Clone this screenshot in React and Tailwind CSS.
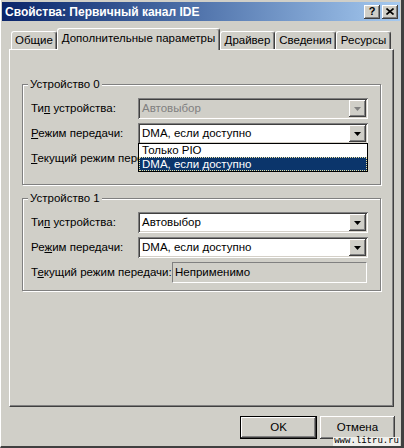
import React from "react";

const raised =
  "shadow-[inset_-1px_-1px_0_#404040,inset_1px_1px_0_#ffffff,inset_-2px_-2px_0_#808080,inset_2px_2px_0_#d4d0c8]";
const sunken =
  "shadow-[inset_1px_1px_0_#808080,inset_-1px_-1px_0_#ffffff,inset_2px_2px_0_#404040,inset_-2px_-2px_0_#d4d0c8]";

const Arrow = ({ color = "#000" }) => (
  <svg width="7" height="4" viewBox="0 0 7 4">
    <polygon points="0,0 7,0 3.5,4" fill={color} />
  </svg>
);

const Combo = ({ value, disabled, children }) => (
  <div
    className={`relative flex items-center h-[21px] w-[230px] p-[2px] ${sunken} ${
      disabled ? "bg-[#d0cfc8]" : "bg-white"
    }`}
  >
    <span className={`flex-1 pl-[2px] ${disabled ? "text-[#808080]" : "text-black"}`}>{value}</span>
    <div className={`flex items-center justify-center w-[17px] h-[17px] bg-[#d0cfc8] ${raised}`}>
      <Arrow color={disabled ? "#808080" : "#000"} />
    </div>
    {children}
  </div>
);

const Row = ({ label, children }) => (
  <div className="flex items-center h-[21px]">
    <span className="w-[115px] pl-[8px] whitespace-nowrap">{label}</span>
    {children}
  </div>
);

const Field = ({ label, value }) => (
  <div className="flex items-center h-[21px]">
    <span className="w-[149px] pl-[8px] whitespace-nowrap">{label}</span>
    <div className="flex items-center h-[21px] w-[195px] border border-t-[#808080] border-l-[#808080] border-r-white border-b-white pl-[2px]">
      {value}
    </div>
  </div>
);

const Group = ({ title, height, className = "", children }) => (
  <div
    className={`relative w-[359px] border border-[#808080] shadow-[inset_1px_1px_0_#ffffff,1px_1px_0_#ffffff] ${className}`}
    style={{ height }}
  >
    <span className="absolute -top-[8px] left-[5px] px-[2px] bg-[#d0cfc8] leading-[14px]">{title}</span>
    <div className="flex flex-col gap-[4px] pt-[13px]">{children}</div>
  </div>
);

const Tab = ({ label, w, active }) => (
  <div
    className={`flex items-center justify-center rounded-t-[3px] border-t border-l border-white bg-[#d0cfc8] shadow-[inset_-1px_0_0_#808080] border-r border-r-[#404040] ${
      active ? "relative z-10 h-[22px] -mb-[1px] pb-[2px]" : "h-[18px]"
    }`}
    style={{ width: w }}
  >
    {label}
  </div>
);

export default function App() {
  return (
    <div
      className="relative flex flex-col w-[404px] h-[448px] bg-[#d0cfc8] border-l border-l-white border-r-[3px] border-r-[#404040] border-b-2 border-b-[#404040] text-[11.5px] text-black overflow-hidden"
      style={{ fontFamily: '"Liberation Sans", Arial, sans-serif' }}
    >
      <div className="flex items-center h-[19px] mt-[2px] mx-[1px] pl-[3px] pr-[2px] bg-gradient-to-r from-[#0a246a] to-[#a6caf0]">
        <span className="flex-1 text-white font-bold text-[12px]">Свойства: Первичный канал IDE</span>
        <div className="flex gap-[2px]">
          <div className={`flex items-center justify-center w-[16px] h-[14px] bg-[#d0cfc8] font-bold text-[11px] leading-none ${raised}`}>?</div>
          <div className={`flex items-center justify-center w-[16px] h-[14px] bg-[#d0cfc8] ${raised}`}>
            <svg width="8" height="7" viewBox="0 0 8 7">
              <path d="M0.5 0.5 L7.5 6.5 M7.5 0.5 L0.5 6.5" stroke="#000" strokeWidth="1.6" />
            </svg>
          </div>
        </div>
      </div>

      <div className="flex items-end ml-[10px] mt-[7px] h-[21px]">
        <Tab label="Общие" w={46} />
        <Tab label="Дополнительные параметры" w={163} active />
        <Tab label="Драйвер" w={55} />
        <Tab label="Сведения" w={61} />
        <Tab label="Ресурсы" w={55} />
      </div>

      <div className="flex flex-col ml-[8px] w-[385px] h-[358px] pl-[12px] pt-[34px] border-t border-l border-white border-r border-b border-r-[#404040] border-b-[#404040] shadow-[inset_-1px_-1px_0_#808080]">
        <Group title="Устройство 0" height={101}>
          <Row label={<>Ти<u>п</u> устройства:</>}>
            <Combo value="Автовыбор" disabled />
          </Row>
          <Row label={<><u>Р</u>ежим передачи:</>}>
            <Combo value="DMA, если доступно">
              <div className="absolute left-0 top-[20px] z-20 w-[230px] h-[29px] border border-black bg-white flex flex-col">
                <div className="h-[13px] leading-[13px] pl-[3px]">Только PIO</div>
                <div className="h-[14px] leading-[12px] pl-[2px] bg-[#0b356b] text-white border border-dotted border-[#e8e0a0]">
                  DMA, если доступно
                </div>
              </div>
            </Combo>
          </Row>
          <Field label={<><u>Т</u>екущий режим передачи:</>} value="Неприменимо" />
        </Group>

        <Group title="Устройство 1" height={93} className="mt-[13px]">
          <Row label={<>Ти<u>п</u> устройства:</>}>
            <Combo value="Автовыбор" />
          </Row>
          <Row label={<>Ре<u>ж</u>им передачи:</>}>
            <Combo value="DMA, если доступно" />
          </Row>
          <Field label={<>Т<u>е</u>кущий режим передачи:</>} value="Неприменимо" />
        </Group>
      </div>

      <div className="flex justify-end gap-[3px] mt-[9px] pr-[6px]">
        <div className="w-[77px] h-[23px] border border-black">
          <div className={`flex items-center justify-center w-full h-full bg-[#d0cfc8] ${raised}`}>OK</div>
        </div>
        <div className={`flex items-center justify-center w-[75px] h-[23px] bg-[#d0cfc8] ${raised}`}>Отмена</div>
      </div>

      <span
        className="absolute right-[1px] bottom-0 px-[1px] text-[9px] leading-[9px] bg-[#f0f0ec] text-black"
        style={{ fontFamily: '"Liberation Mono", monospace' }}
      >
        www.litru.ru
      </span>
    </div>
  );
}
